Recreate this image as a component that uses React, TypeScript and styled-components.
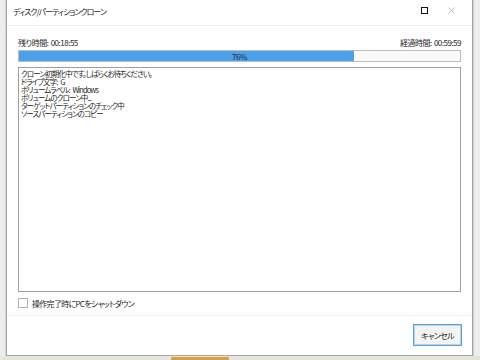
import React from "react";
import styled, { createGlobalStyle } from "styled-components";

const GlobalStyle = createGlobalStyle`
  html, body { margin: 0; padding: 0; }
  body {
    background: #ededed;
    font-family: "Noto Sans CJK JP", "Noto Sans", "Liberation Sans", sans-serif;
    color: #1e1e1e;
  }
  * { box-sizing: border-box; }
`;

const Screen = styled.div`
  width: 480px;
  height: 360px;
  display: flex;
  flex-direction: column;
  overflow: hidden;
`;

const WindowRow = styled.div`
  display: flex;
  padding-left: 6px;
  height: 356px;
`;

const Window = styled.div`
  width: 467px;
  height: 356px;
  background: #ffffff;
  border: 1px solid #a6a6a6;
  border-top: none;
  box-shadow: -1px 0 0 #d6d6d6, 1px 0 0 #d0d0d0, 0 1px 0 #c8c8c8;
  display: flex;
  flex-direction: column;
`;

const TitleBar = styled.div`
  height: 26px;
  flex: none;
  display: flex;
  align-items: center;
  padding: 0 0 0 6px;
  border-bottom: 1px solid #ededed;
`;

const Title = styled.div`
  flex: 1;
  font-size: 8px;
  font-feature-settings: "palt";
  letter-spacing: -1px;
  padding-bottom: 3px;
`;

const Controls = styled.div`
  display: flex;
  align-items: center;
  padding-bottom: 4px;
`;

const MaxIcon = styled.div`
  width: 7px;
  height: 7px;
  border: 1.5px solid #111;
  margin-right: 20px;
`;

const CloseIcon = styled.svg`
  width: 7px;
  height: 7px;
  margin-right: 17px;
`;

const Body = styled.div`
  flex: none;
  height: 289px;
  padding: 10px 11px 5px 11px;
  display: flex;
  flex-direction: column;
`;

const TimeRow = styled.div`
  height: 12px;
  display: flex;
  justify-content: space-between;
  align-items: center;
  font-size: 8px;
  font-feature-settings: "palt";
  letter-spacing: -0.5px;
  word-spacing: 1px;
`;

const Bar = styled.div`
  margin-top: 2px;
  height: 12px;
  border: 1px solid #bdbdbd;
  background: #fbfbfb;
  position: relative;
  flex: none;
`;

const Fill = styled.div`
  height: 100%;
  background: #4ba1ea;
`;

const BarLabel = styled.div`
  position: absolute;
  inset: 0;
  display: flex;
  align-items: center;
  justify-content: center;
  font-size: 8px;
  color: #1b2a44;
  letter-spacing: -0.5px;
`;

const LogBox = styled.div`
  margin-top: 5px;
  height: 225px;
  flex: none;
  border: 1px solid #9f9f9f;
  padding: 2px 2px;
  font-size: 7.5px;
  line-height: 8px;
  font-feature-settings: "palt";
  letter-spacing: -0.9px;
  word-spacing: 2px;
  background: #fff;
`;

const LogLine = styled.div`
  white-space: nowrap;
  height: 8px;
`;

const CheckRow = styled.label`
  margin-top: 4px;
  height: 14px;
  display: flex;
  align-items: center;
  gap: 4px;
  font-size: 8px;
  font-feature-settings: "palt";
  letter-spacing: -0.7px;
`;

const CheckBox = styled.span`
  width: 10px;
  height: 10px;
  border: 1px solid #b0b0b0;
  background: #fff;
  flex: none;
`;

const Footer = styled.div`
  flex: 1;
  border-top: 1px solid #ececec;
  display: flex;
  justify-content: flex-end;
  align-items: flex-start;
  padding: 8px 10px 0 0;
`;

const Button = styled.button`
  width: 49px;
  height: 22px;
  border: 1px solid #5b9fd3;
  box-shadow: inset 0 0 0 1px #b3d6f0;
  background: #f4f4f4;
  font-family: inherit;
  font-size: 8px;
  font-feature-settings: "palt";
  letter-spacing: -0.7px;
  color: #1e1e1e;
  padding: 0;
`;

const BottomStrip = styled.div`
  height: 4px;
  background: #e9e4da;
  display: flex;
`;

const TaskItem = styled.div`
  margin-left: 171px;
  width: 58px;
  height: 4px;
  margin-top: 1px;
  background: #d99f45;
`;

const logLines = [
  "クローン初期化中です。しばらくお待ちください。",
  "ドライブ文字: G",
  "ボリュームラベル: Windows",
  "ボリュームのクローン中...",
  "ターゲットパーティションのチェック中",
  "ソースパーティションのコピー",
];

export default function App() {
  const progress = 76;
  return (
    <>
      <GlobalStyle />
      <Screen>
        <WindowRow>
          <Window>
            <TitleBar>
              <Title>ディスク/パーティションクローン</Title>
              <Controls>
                <MaxIcon />
                <CloseIcon viewBox="0 0 7 7">
                  <path d="M0.5 0.5 L6.5 6.5 M6.5 0.5 L0.5 6.5" stroke="#b5b5b5" strokeWidth="0.9" fill="none" />
                </CloseIcon>
              </Controls>
            </TitleBar>
            <Body>
              <TimeRow>
                <span>残り時間: 00:18:55</span>
                <span>経過時間: 00:59:59</span>
              </TimeRow>
              <Bar>
                <Fill style={{ width: `${progress}%` }} />
                <BarLabel>{progress}%</BarLabel>
              </Bar>
              <LogBox>
                {logLines.map((l) => (
                  <LogLine key={l}>{l}</LogLine>
                ))}
              </LogBox>
              <CheckRow>
                <CheckBox />
                <span>操作完了時にPCをシャットダウン</span>
              </CheckRow>
            </Body>
            <Footer>
              <Button>キャンセル</Button>
            </Footer>
          </Window>
        </WindowRow>
        <BottomStrip>
          <TaskItem />
        </BottomStrip>
      </Screen>
    </>
  );
}
